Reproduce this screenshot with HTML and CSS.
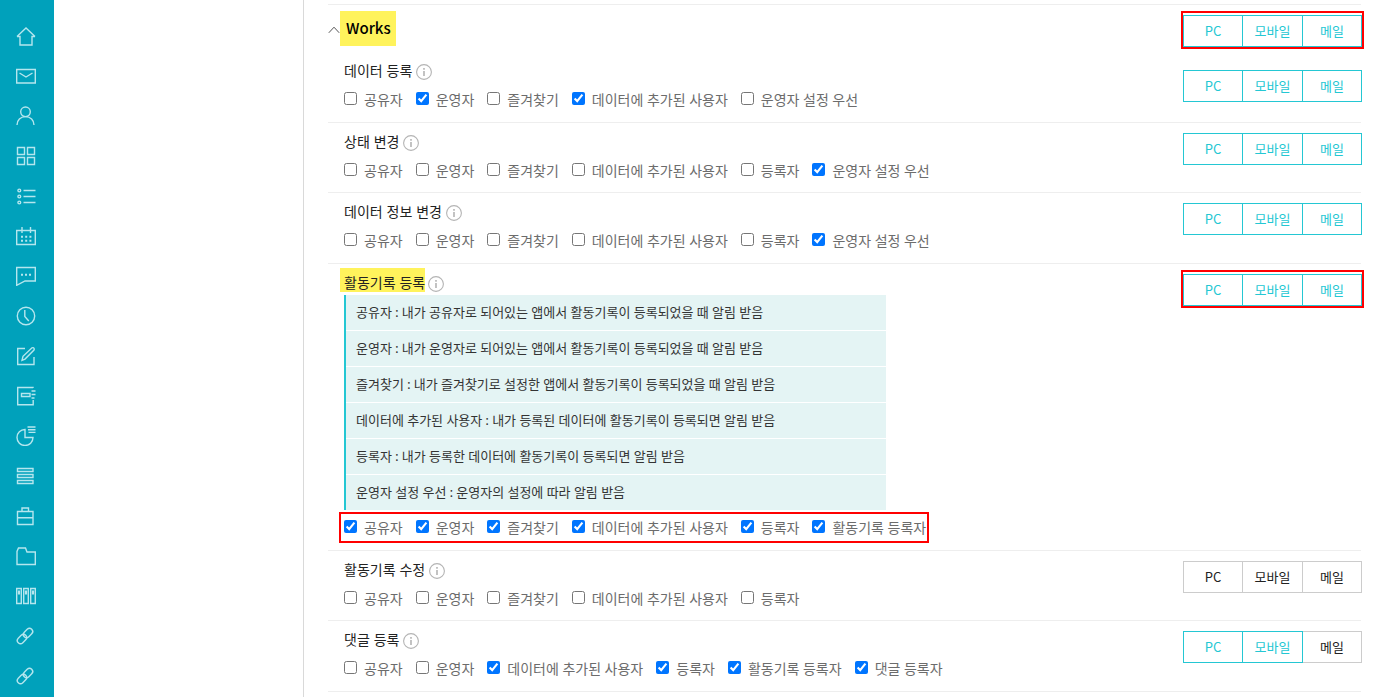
FILE: index.html
```html
<!DOCTYPE html>
<html lang="ko">
<head>
<meta charset="utf-8">
<title>Works 알림 설정</title>
<link rel="stylesheet" href="styles.css">
</head>
<body>
<svg class="sprite" aria-hidden="true">
  <symbol id="info" viewBox="0 0 16 16"><circle cx="8" cy="8" r="7.4" fill="none" stroke="#b4b4b4" stroke-width="1.1"/><path d="M7.2 4h1.6v1.8H7.2zM7.2 7h1.6v5H7.2z" fill="#b4b4b4"/></symbol>
  <symbol id="link" viewBox="0 0 20 20"><g transform="rotate(-45 9 10)"><rect x="-.5" y="6.8" width="10.5" height="6.4" rx="3.2"/><rect x="8" y="6.8" width="10.5" height="6.4" rx="3.2"/></g></symbol>
</svg>
<div class="app">
  <nav class="rail" aria-label="메뉴">
    <a class="rail-link" href="#" aria-label="홈"><svg class="rail-icon" viewBox="0 0 20 20"><path d="M1 10.500 10 2l9 8.500M1 10.500h3v8.500h12V10.500h3"/></svg></a>
    <a class="rail-link" href="#" aria-label="메일"><svg class="rail-icon" viewBox="0 0 20 20"><path d="M.7 3.500h18.600v13.500H.7zM3.500 7l6.500 4 6.500-4"/></svg></a>
    <a class="rail-link" href="#" aria-label="주소록"><svg class="rail-icon" viewBox="0 0 20 20"><circle cx="9.500" cy="5.800" r="4.800"/><path d="M1 19c0-5 3.500-8.400 8.500-8.400S18 14 18 19"/></svg></a>
    <a class="rail-link" href="#" aria-label="게시판"><svg class="rail-icon" viewBox="0 0 20 20"><path d="M1.500 1.500h7v7h-7zM11.500 1.500h7v7h-7zM1.500 11.500h7v7h-7zM11.500 11.500h7v7h-7z"/></svg></a>
    <a class="rail-link" href="#" aria-label="할 일"><svg class="rail-icon" viewBox="0 0 20 20"><circle cx="3.300" cy="4.500" r="1.400"/><circle cx="3.300" cy="10.500" r="1.400"/><circle cx="3.300" cy="16.500" r="1.400"/><path d="M7.500 4.500H19.500M7.500 10.500H19.500M7.500 16.500H19.500"/></svg></a>
    <a class="rail-link" href="#" aria-label="캘린더"><svg class="rail-icon" viewBox="0 0 20 20"><path d="M.7 4.500h18.600v14H.7zM6 1v6M14.500 1v6"/><path d="M5 10.700h12M5 14.700h12" stroke-width="2" stroke-dasharray="2 2.200"/></svg></a>
    <a class="rail-link" href="#" aria-label="대화"><svg class="rail-icon" viewBox="0 0 20 20"><path d="M.7 1.500h18.600v13.500H9L.7 19.300z"/><path d="M5 8.700h11" stroke-width="2" stroke-dasharray="2 2"/></svg></a>
    <a class="rail-link" href="#" aria-label="근태"><svg class="rail-icon" viewBox="0 0 20 20"><circle cx="10" cy="10" r="8.700"/><path d="M8.800 4v6.500l4 4.500"/></svg></a>
    <a class="rail-link" href="#" aria-label="보고"><svg class="rail-icon" viewBox="0 0 20 20"><path d="M9 2.500H1.700v16h16.300V11M6 14.300l1-4 9-8.500q1.500-.5 2 .5t0 1.800l-9 9z"/></svg></a>
    <a class="rail-link" href="#" aria-label="전자결재"><svg class="rail-icon" viewBox="0 0 20 20"><path d="M17 2V1.500H1.700v17.300h15.500V14M15.500 5h4M15.500 8.500h4M15.500 12h3M5.500 7.500h8.500v3H5.500z"/></svg></a>
    <a class="rail-link" href="#" aria-label="통계"><svg class="rail-icon" viewBox="0 0 20 20"><path d="M9 3.500a8 8 0 1 0 8 8H9zM11.500 1h8M12 3.700h7.500M12.500 6.400h7"/></svg></a>
    <a class="rail-link" href="#" aria-label="목록"><svg class="rail-icon" viewBox="0 0 20 20"><path d="M1.500 2.500h15.500v3H1.500zM1.500 8.500h15.500v3H1.500zM1.500 14.500h15.500v3H1.500z"/></svg></a>
    <a class="rail-link" href="#" aria-label="업무"><svg class="rail-icon" viewBox="0 0 20 20"><path d="M1.500 5.500h15.500v13H1.500zM6 5.500v-3.500h6.500v3.500M1.500 11.800h15.500"/></svg></a>
    <a class="rail-link" href="#" aria-label="자료실"><svg class="rail-icon" viewBox="0 0 20 20"><path d="M1 18.500V5.500l1.500-3.500h7l1.500 4h8.300v12.500z"/></svg></a>
    <a class="rail-link" href="#" aria-label="문서함"><svg class="rail-icon" viewBox="0 0 20 20"><path d="M.7 2.500h4.600v15H.7zM7.700 2.500h4.600v15H7.700zM14.700 2.500h4.600v15h-4.600z"/><path d="M3 4.500v4M10 4.500v4M17 4.500v4" stroke-width="2.200"/></svg></a>
    <a class="rail-link" href="#" aria-label="링크 1"><svg class="rail-icon"><use href="#link"/></svg></a>
    <a class="rail-link" href="#" aria-label="링크 2"><svg class="rail-icon"><use href="#link"/></svg></a>
  </nav>
  <aside class="side"></aside>
  <main class="content">
    <header class="section-head">
      <button class="toggle" type="button" aria-label="접기"><svg class="caret" viewBox="0 0 12 8"><path d="M.8 6.800 6 1.200l5.200 5.600" fill="none" stroke="#555"/></svg></button>
      <h2 class="section-title">Works</h2>
      <div class="channels channels--boxed"><button class="channel channel--on" type="button">PC</button><button class="channel channel--mid channel--on" type="button">모바일</button><button class="channel channel--on" type="button">메일</button></div>
    </header>

    <section class="item item--first">
      <div class="item-body">
        <h3 class="item-title">데이터 등록<svg class="info"><use href="#info"/></svg></h3>
        <div class="checks">
          <label class="check"><input class="box" type="checkbox">공유자</label>
          <label class="check"><input class="box" type="checkbox" checked>운영자</label>
          <label class="check"><input class="box" type="checkbox">즐겨찾기</label>
          <label class="check"><input class="box" type="checkbox" checked>데이터에 추가된 사용자</label>
          <label class="check"><input class="box" type="checkbox">운영자 설정 우선</label>
        </div>
      </div>
      <div class="channels"><button class="channel channel--on" type="button">PC</button><button class="channel channel--mid channel--on" type="button">모바일</button><button class="channel channel--on" type="button">메일</button></div>
    </section>

    <section class="item">
      <div class="item-body">
        <h3 class="item-title">상태 변경<svg class="info"><use href="#info"/></svg></h3>
        <div class="checks">
          <label class="check"><input class="box" type="checkbox">공유자</label>
          <label class="check"><input class="box" type="checkbox">운영자</label>
          <label class="check"><input class="box" type="checkbox">즐겨찾기</label>
          <label class="check"><input class="box" type="checkbox">데이터에 추가된 사용자</label>
          <label class="check"><input class="box" type="checkbox">등록자</label>
          <label class="check"><input class="box" type="checkbox" checked>운영자 설정 우선</label>
        </div>
      </div>
      <div class="channels"><button class="channel channel--on" type="button">PC</button><button class="channel channel--mid channel--on" type="button">모바일</button><button class="channel channel--on" type="button">메일</button></div>
    </section>

    <section class="item item--tall">
      <div class="item-body">
        <h3 class="item-title">데이터 정보 변경<svg class="info"><use href="#info"/></svg></h3>
        <div class="checks">
          <label class="check"><input class="box" type="checkbox">공유자</label>
          <label class="check"><input class="box" type="checkbox">운영자</label>
          <label class="check"><input class="box" type="checkbox">즐겨찾기</label>
          <label class="check"><input class="box" type="checkbox">데이터에 추가된 사용자</label>
          <label class="check"><input class="box" type="checkbox">등록자</label>
          <label class="check"><input class="box" type="checkbox" checked>운영자 설정 우선</label>
        </div>
      </div>
      <div class="channels"><button class="channel channel--on" type="button">PC</button><button class="channel channel--mid channel--on" type="button">모바일</button><button class="channel channel--on" type="button">메일</button></div>
    </section>

    <section class="item item--tall">
      <div class="item-body">
        <h3 class="item-title"><mark class="mark">활동기록 등록</mark><svg class="info"><use href="#info"/></svg></h3>
        <ul class="notes">
          <li class="note">공유자 : 내가 공유자로 되어있는 앱에서 활동기록이 등록되었을 때 알림 받음</li>
          <li class="note">운영자 : 내가 운영자로 되어있는 앱에서 활동기록이 등록되었을 때 알림 받음</li>
          <li class="note">즐겨찾기 : 내가 즐겨찾기로 설정한 앱에서 활동기록이 등록되었을 때 알림 받음</li>
          <li class="note">데이터에 추가된 사용자 : 내가 등록된 데이터에 활동기록이 등록되면 알림 받음</li>
          <li class="note">등록자 : 내가 등록한 데이터에 활동기록이 등록되면 알림 받음</li>
          <li class="note">운영자 설정 우선 : 운영자의 설정에 따라 알림 받음</li>
        </ul>
        <div class="checks checks--boxed">
          <label class="check"><input class="box" type="checkbox" checked>공유자</label>
          <label class="check"><input class="box" type="checkbox" checked>운영자</label>
          <label class="check"><input class="box" type="checkbox" checked>즐겨찾기</label>
          <label class="check"><input class="box" type="checkbox" checked>데이터에 추가된 사용자</label>
          <label class="check"><input class="box" type="checkbox" checked>등록자</label>
          <label class="check"><input class="box" type="checkbox" checked>활동기록 등록자</label>
        </div>
      </div>
      <div class="channels channels--boxed"><button class="channel channel--on" type="button">PC</button><button class="channel channel--mid channel--on" type="button">모바일</button><button class="channel channel--on" type="button">메일</button></div>
    </section>

    <section class="item">
      <div class="item-body">
        <h3 class="item-title">활동기록 수정<svg class="info"><use href="#info"/></svg></h3>
        <div class="checks">
          <label class="check"><input class="box" type="checkbox">공유자</label>
          <label class="check"><input class="box" type="checkbox">운영자</label>
          <label class="check"><input class="box" type="checkbox">즐겨찾기</label>
          <label class="check"><input class="box" type="checkbox">데이터에 추가된 사용자</label>
          <label class="check"><input class="box" type="checkbox">등록자</label>
        </div>
      </div>
      <div class="channels"><button class="channel" type="button">PC</button><button class="channel channel--mid" type="button">모바일</button><button class="channel" type="button">메일</button></div>
    </section>

    <section class="item item--tall">
      <div class="item-body">
        <h3 class="item-title">댓글 등록<svg class="info"><use href="#info"/></svg></h3>
        <div class="checks">
          <label class="check"><input class="box" type="checkbox">공유자</label>
          <label class="check"><input class="box" type="checkbox">운영자</label>
          <label class="check"><input class="box" type="checkbox" checked>데이터에 추가된 사용자</label>
          <label class="check"><input class="box" type="checkbox" checked>등록자</label>
          <label class="check"><input class="box" type="checkbox" checked>활동기록 등록자</label>
          <label class="check"><input class="box" type="checkbox" checked>댓글 등록자</label>
        </div>
      </div>
      <div class="channels"><button class="channel channel--on" type="button">PC</button><button class="channel channel--mid channel--on" type="button">모바일</button><button class="channel" type="button">메일</button></div>
    </section>
  </main>
</div>
</body>
</html>
```
FILE: styles.css
```css
* { box-sizing: border-box; }

body {
  margin: 0;
  background: #fff;
  color: #222;
  font-family: "Noto Sans CJK KR", sans-serif;
  font-size: 14px;
}

.sprite { display: none; }

.app {
  display: flex;
  min-height: 100vh;
}

.rail {
  flex: none;
  width: 54px;
  padding-top: 16px;
  background: #00a1bb;
}

.rail-link {
  display: flex;
  align-items: center;
  height: 40px;
  padding-left: 16px;
}

.rail-icon {
  width: 20px;
  height: 20px;
  fill: none;
  stroke: #b5e6ee;
  stroke-width: 1.4;
}

.side {
  flex: none;
  width: 250px;
  border-right: 1px solid #d9d9d9;
}

.content {
  flex: 1;
  min-width: 0;
  padding: 4px 22px 0 24px;
}

.section-head {
  display: flex;
  align-items: flex-start;
  height: 48px;
  border-top: 1px solid #eee;
}

.toggle {
  margin: 21px 0 0;
  padding: 0;
  border: 0;
  background: none;
  line-height: 0;
}

.caret {
  width: 12px;
  height: 8px;
}

.section-title {
  margin: 6px auto 0 0;
  padding: 0 5px 2px 6px;
  background: #fff35c;
  color: #000;
  font-size: 15px;
  font-weight: 500;
  line-height: 33px;
}

.section-head .channels { margin-top: 10px; }

.item {
  display: flex;
  align-items: flex-start;
  justify-content: space-between;
  padding: 0 0 6px 16px;
  border-bottom: 1px solid #eee;
}

.item--tall,
.item--first { padding-bottom: 7px; }

.item-body {
  flex: 1;
  padding-top: 4px;
}

.item-title {
  display: flex;
  align-items: flex-start;
  height: 27px;
  margin: 0;
  padding-top: 2px;
  font-size: 14px;
  font-weight: 400;
  line-height: 24px;
}

.info {
  width: 16px;
  height: 16px;
  margin: 6px 0 0 4px;
}

.mark {
  margin: -2px -1px 0 -4px;
  padding: 4px 0 0 4px;
  background: #fff35c;
  color: #222;
  line-height: 20px;
}

.checks {
  display: flex;
  gap: 13px;
  position: relative;
  width: fit-content;
  margin-top: 1px;
  color: #6c6c6c;
  font-family: Lato, "Noto Sans CJK KR", sans-serif;
  line-height: 31px;
}

.checks--boxed { margin-top: 2px; }

.checks--boxed::after {
  content: "";
  position: absolute;
  inset: 0 -3px 0 -5px;
  border: 2px solid #f00;
  pointer-events: none;
}

.check {
  display: flex;
  align-items: center;
  white-space: nowrap;
}

.box {
  width: 13px;
  height: 13px;
  margin: 0 7px 2px 0;
}

.notes {
  display: grid;
  gap: 1px;
  max-width: 542px;
  margin: 0;
  padding: 0;
  border-left: 2px solid #24c7d3;
  list-style: none;
}

.note {
  padding-left: 10px;
  background: #e4f4f4;
  color: #333;
  font-family: Lato, "Noto Sans CJK KR", sans-serif;
  font-size: 13px;
  line-height: 35px;
}

.channels {
  display: flex;
  flex: none;
  position: relative;
  margin: 10px -1px 0 0;
}

.item--first .channels { margin-top: 18px; }

.channels--boxed::after {
  content: "";
  position: absolute;
  inset: -4px -2px -2px;
  z-index: 2;
  border: 2px solid #f00;
  pointer-events: none;
}

.channel {
  width: 60px;
  height: 32px;
  padding: 0 0 2px;
  border: 1px solid #ccc;
  background: #fff;
  color: #222;
  font-family: inherit;
  font-size: 13px;
}

.channel + .channel { margin-left: -1px; }

.channel--mid { width: 61px; }

.channel--on {
  position: relative;
  z-index: 1;
  border-color: #24c7d3;
  color: #24c7d3;
}
```
